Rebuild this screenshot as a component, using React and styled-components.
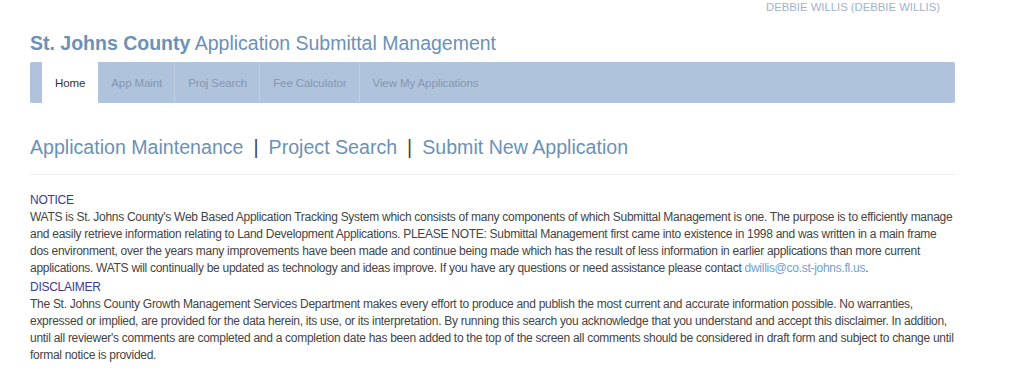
import React from "react";
import styled, { createGlobalStyle } from "styled-components";

const GlobalStyle = createGlobalStyle`
  body {
    margin: 0;
    background: #fff;
    font-family: "Liberation Sans", Arial, sans-serif;
    color: #333;
  }
`

const Page = styled.div`
  width: 925px;
  padding: 0 0 0 30px;
`

const UserBar = styled.div`
  display: flex;
  justify-content: flex-end;
  padding: 1px 15px 0 0;
  height: 15px;
  font-size: 11.3px;
  color: #9fb3cc;
  text-transform: uppercase;
`

const Title = styled.h1`
  margin: 16px 0 0 0;
  font-size: 19.5px;
  font-weight: normal;
  line-height: 22px;
  color: #6b91b6;

  b {
    font-weight: bold;
  }
`

const Nav = styled.div`
  display: flex;
  margin-top: 8px;
  height: 41px;
  padding-left: 12px;
  background: #b0c3dc;
  border-radius: 2px;
`

const Tab = styled.div`
  display: flex;
  align-items: center;
  padding: 0 12px 0 13px;
  font-size: 11.5px;
  letter-spacing: -0.1px;
  color: ${p => (p.active ? "#333" : "#8497b0")};
  background: ${p => (p.active ? "#fff" : "transparent")};
  border-right: 1px solid ${p => (p.active ? "#fff" : "#c0d0e3")};

  &:last-child {
    border-right: none;
  }
`

const Links = styled.div`
  display: flex;
  align-items: center;
  gap: 10px;
  margin-top: 33px;
  padding-bottom: 15px;
  border-bottom: 1px solid #eee;
  font-size: 19.6px;
  color: #6b91b6;
`

const Sep = styled.span`
  color: #444;
`

const Section = styled.div`
  margin-top: ${p => p.gap}px;
  font-size: 12px;
  letter-spacing: -0.28px;
  line-height: 17px;
  color: #444;
`

const Heading = styled.div`
  color: #3a3a96;
`

const Mail = styled.a`
  color: #6fa0d2;
  text-decoration: none;
`

const tabs = ["Home", "App Maint", "Proj Search", "Fee Calculator", "View My Applications"];

export default function App() {
  return (
    <Page>
      <GlobalStyle />
      <UserBar>Debbie Willis (Debbie Willis)</UserBar>
      <Title>
        <b>St. Johns County</b> Application Submittal Management
      </Title>
      <Nav>
        {tabs.map((t, i) => (
          <Tab key={t} active={i === 0}>{t}</Tab>
        ))}
      </Nav>
      <Links>
        <span>Application Maintenance</span>
        <Sep>|</Sep>
        <span>Project Search</span>
        <Sep>|</Sep>
        <span>Submit New Application</span>
      </Links>
      <Section gap={17}>
        <Heading>NOTICE</Heading>
        WATS is St. Johns County's Web Based Application Tracking System which consists of many components of which Submittal Management is one. The purpose is to efficiently manage and easily retrieve information relating to Land Development Applications. PLEASE NOTE: Submittal Management first came into existence in 1998 and was written in a main frame dos environment, over the years many improvements have been made and continue being made which has the result of less information in earlier applications than more current applications. WATS will continually be updated as technology and ideas improve. If you have ary questions or need assistance please contact <Mail>dwillis@co.st-johns.fl.us</Mail>.
      </Section>
      <Section gap={2}>
        <Heading>DISCLAIMER</Heading>
        The St. Johns County Growth Management Services Department makes every effort to produce and publish the most current and accurate information possible. No warranties, expressed or implied, are provided for the data herein, its use, or its interpretation. By running this search you acknowledge that you understand and accept this disclaimer. In addition, until all reviewer's comments are completed and a completion date has been added to the top of the screen all comments should be considered in draft form and subject to change until formal notice is provided.
      </Section>
    </Page>
  );
}
